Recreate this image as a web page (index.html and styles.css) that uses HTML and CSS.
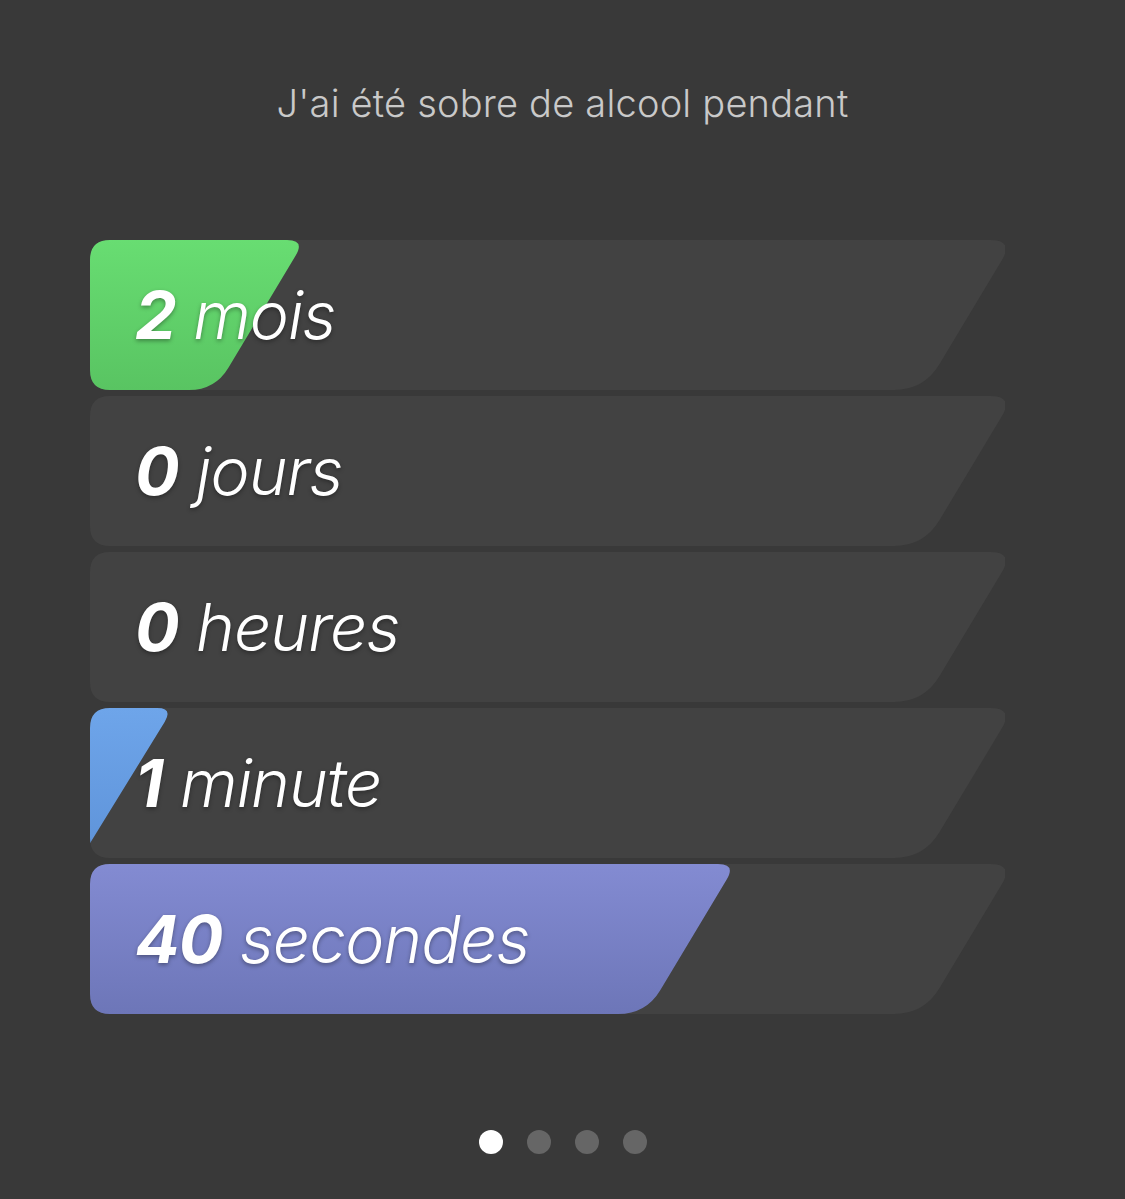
FILE: index.html
```html
<!DOCTYPE html>
<html lang="fr">
<head>
<meta charset="utf-8">
<link rel="stylesheet" href="styles.css">
</head>
<body>
<main class="screen">
  <h1 class="title">J'ai été sobre de alcool pendant</h1>
  <section class="bars">
    <div class="bar">
      <svg class="bar-bg" viewBox="0 0 915 150" width="915" height="150">
        <defs>
          <clipPath id="c1"><path d="M0,20 Q0,0 20,0 L900,0 Q924,0 911.7,20.6 L849.4,124.3 Q834,150 804,150 L20,150 Q0,150 0,130 Z"/></clipPath>
          <linearGradient id="g1" x1="0" y1="0" x2="0" y2="1"><stop offset="0" stop-color="#68DD72"/><stop offset="1" stop-color="#59C462"/></linearGradient>
        </defs>
        <path class="track" d="M0,20 Q0,0 20,0 L900,0 Q924,0 911.7,20.6 L849.4,124.3 Q834,150 804,150 L20,150 Q0,150 0,130 Z"/>
        <path clip-path="url(#c1)" fill="url(#g1)" d="M0,0 L197,0 Q215,0 205.7,15.4 L138.4,127.7 Q125,150 99,150 L0,150 Z"/>
      </svg>
      <p class="label"><b>2</b> mois</p>
    </div>
    <div class="bar">
      <svg class="bar-bg" viewBox="0 0 915 150" width="915" height="150">
        <path class="track" d="M0,20 Q0,0 20,0 L900,0 Q924,0 911.7,20.6 L849.4,124.3 Q834,150 804,150 L20,150 Q0,150 0,130 Z"/>
      </svg>
      <p class="label"><b>0</b> jours</p>
    </div>
    <div class="bar">
      <svg class="bar-bg" viewBox="0 0 915 150" width="915" height="150">
        <path class="track" d="M0,20 Q0,0 20,0 L900,0 Q924,0 911.7,20.6 L849.4,124.3 Q834,150 804,150 L20,150 Q0,150 0,130 Z"/>
      </svg>
      <p class="label"><b>0</b> heures</p>
    </div>
    <div class="bar">
      <svg class="bar-bg" viewBox="0 0 915 150" width="915" height="150">
        <defs>
          <clipPath id="c4"><path d="M0,20 Q0,0 20,0 L900,0 Q924,0 911.7,20.6 L849.4,124.3 Q834,150 804,150 L20,150 Q0,150 0,130 Z"/></clipPath>
          <linearGradient id="g4" x1="0" y1="0" x2="0" y2="1"><stop offset="0" stop-color="#6EA5EA"/><stop offset="1" stop-color="#5E93D9"/></linearGradient>
        </defs>
        <path class="track" d="M0,20 Q0,0 20,0 L900,0 Q924,0 911.7,20.6 L849.4,124.3 Q834,150 804,150 L20,150 Q0,150 0,130 Z"/>
        <path clip-path="url(#c4)" fill="url(#g4)" d="M0,0 L67,0 Q83,0 74.8,13.7 L-9,150 L0,150 Z"/>
      </svg>
      <p class="label"><b>1</b> minute</p>
    </div>
    <div class="bar">
      <svg class="bar-bg" viewBox="0 0 915 150" width="915" height="150">
        <defs>
          <clipPath id="c5"><path d="M0,20 Q0,0 20,0 L900,0 Q924,0 911.7,20.6 L849.4,124.3 Q834,150 804,150 L20,150 Q0,150 0,130 Z"/></clipPath>
          <linearGradient id="g5" x1="0" y1="0" x2="0" y2="1"><stop offset="0" stop-color="#838BD2"/><stop offset="1" stop-color="#6D76B8"/></linearGradient>
        </defs>
        <path class="track" d="M0,20 Q0,0 20,0 L900,0 Q924,0 911.7,20.6 L849.4,124.3 Q834,150 804,150 L20,150 Q0,150 0,130 Z"/>
        <path clip-path="url(#c5)" fill="url(#g5)" d="M0,0 L628,0 Q646,0 636.7,15.4 L570.4,126 Q556,150 528,150 L0,150 Z"/>
      </svg>
      <p class="label"><b>40</b> secondes</p>
    </div>
  </section>
  <nav class="dots">
    <span class="dot active"></span>
    <span class="dot"></span>
    <span class="dot"></span>
    <span class="dot"></span>
  </nav>
</main>
</body>
</html>
```
FILE: styles.css
```css
html, body {
  margin: 0;
  padding: 0;
  background: #393939;
}
body {
  width: 1125px;
  height: 1199px;
  overflow: hidden;
  font-family: Inter, "Open Sans", "Liberation Sans", sans-serif;
}
.screen {
  display: flex;
  flex-direction: column;
  align-items: center;
}
.title {
  margin: 70px 0 0;
  height: 66px;
  line-height: 66px;
  font-size: 38px;
  font-weight: 300;
  color: #c9c9c9;
  letter-spacing: 0.2px;
}
.bars {
  margin-top: 104px;
  display: flex;
  flex-direction: column;
  gap: 6px;
  width: 915px;
  margin-left: -30px;
}
.bar {
  display: grid;
  width: 915px;
  height: 150px;
}
.bar-bg, .label {
  grid-area: 1 / 1;
}
.bar-bg {
  display: block;
}
.track {
  fill: #424242;
}
.label {
  margin: 0;
  align-self: center;
  padding-left: 45px;
  font-size: 66px;
  letter-spacing: -1px;
  font-style: italic;
  font-weight: 300;
  color: #ffffff;
  text-shadow: 0 2px 4px rgba(0, 0, 0, 0.35);
  line-height: 1;
  position: relative;
}
.label b {
  font-weight: 700;
}
.dots {
  margin-top: 116px;
  display: flex;
  gap: 24px;
}
.dot {
  width: 24px;
  height: 24px;
  border-radius: 50%;
  background: #666666;
}
.dot.active {
  background: #ffffff;
}
```
